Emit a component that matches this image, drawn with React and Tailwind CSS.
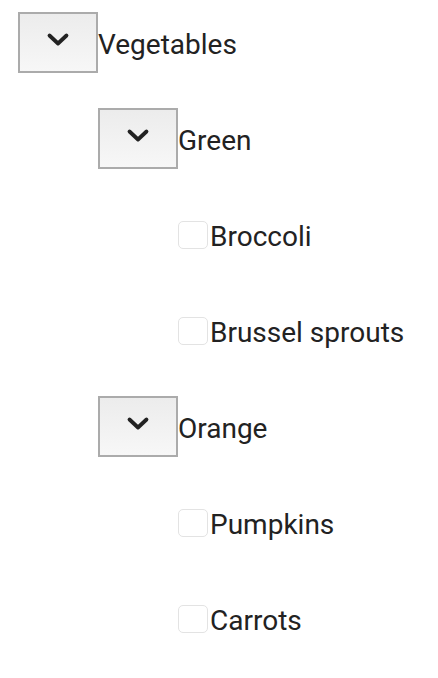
const tree = [
  { type: 'group', label: 'Vegetables', level: 0 },
  { type: 'group', label: 'Green', level: 1 },
  { type: 'leaf', label: 'Broccoli', level: 2 },
  { type: 'leaf', label: 'Brussel sprouts', level: 2 },
  { type: 'group', label: 'Orange', level: 1 },
  { type: 'leaf', label: 'Pumpkins', level: 2 },
  { type: 'leaf', label: 'Carrots', level: 2 },
]

const indent = ['pl-[18px]', 'pl-[98px]', 'pl-[178px]']

function Chevron() {
  return (
    <svg width="26" height="16" viewBox="0 0 26 16" fill="none">
      <path d="M4.5 3.5 L13 11.5 L21.5 3.5" stroke="#222" strokeWidth="3.8" strokeLinecap="round" strokeLinejoin="round" />
    </svg>
  )
}

function Row({ item }) {
  return (
    <div className={`flex h-[61px] items-center ${indent[item.level]}`}>
      {item.type === 'group' ? (
        <button className="flex h-[61px] w-[80px] shrink-0 items-center justify-center border-2 border-[#ababab] bg-gradient-to-b from-[#ececec] to-[#f7f7f7] pb-[5px]">
          <Chevron />
        </button>
      ) : (
        <span className="h-[28px] w-[30px] shrink-0 rounded-[5px] border border-[#e3e3e3] bg-white" />
      )}
      <span className={`mt-[4px] text-[28px] leading-none text-[#222] ${item.type === 'leaf' ? 'ml-[2px]' : ''}`}>{item.label}</span>
    </div>
  )
}

export default function App() {
  return (
    <div className="min-h-[678px] w-[438px] bg-white pt-[12px] font-['Roboto',sans-serif]">
      <div className="flex flex-col gap-[35px]">
        {tree.map((item) => (
          <Row key={item.label} item={item} />
        ))}
      </div>
    </div>
  )
}
